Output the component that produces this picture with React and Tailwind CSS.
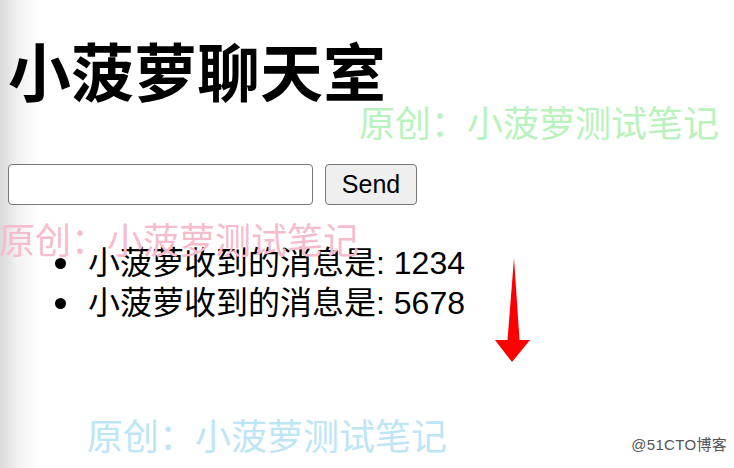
export default function App() {
  const cjk = { fontFamily: '"Noto Sans CJK SC", sans-serif' };
  const mixed = { fontFamily: '"Liberation Sans", "Noto Sans CJK SC", sans-serif' };
  const wm = "原创：小菠萝测试笔记";
  return (
    <div className="relative w-[734px] h-[468px] overflow-hidden bg-[linear-gradient(to_right,#d9d9d9_0px,#f0f0f0_16px,#ffffff_38px)]">
      <div className="flex flex-col pl-[8px]">
        <h1 className="mt-[37px] text-[63px] leading-[63px] font-bold text-black" style={cjk}>
          小菠萝聊天室
        </h1>
        <div className="mt-[64px] flex items-center gap-[12px]">
          <input
            type="text"
            className="w-[305px] h-[41px] rounded-[4px] border-[1.5px] border-[#767676] bg-white outline-none"
          />
          <button
            className="w-[92px] h-[41px] rounded-[4px] border-[1.5px] border-[#767676] bg-[#efefef] text-[25px] text-black leading-none"
            style={mixed}
          >
            Send
          </button>
        </div>
        <ul className="mt-[38px] flex flex-col pl-[47px]">
          {["1234", "5678"].map((n) => (
            <li key={n} className="flex items-center h-[40px] gap-[22px] text-[32px] text-black" style={mixed}>
              <span className="w-[11px] h-[11px] rounded-full bg-black shrink-0" />
              <span className="leading-[40px]">小菠萝收到的消息是: {n}</span>
            </li>
          ))}
        </ul>
      </div>

      <div className="absolute left-[359px] top-[99px] text-[36px] leading-[44px] text-[#b9f2bc] whitespace-nowrap" style={cjk}>
        {wm}
      </div>
      <div className="absolute left-[-1px] top-[216px] text-[36px] leading-[44px] text-[#f6bccd] whitespace-nowrap" style={cjk}>
        {wm}
      </div>
      <div className="absolute left-[87px] top-[412px] text-[36px] leading-[44px] text-[#bde5f6] whitespace-nowrap" style={cjk}>
        {wm}
      </div>

      <svg className="absolute left-[494px] top-[256px]" width="38" height="108" viewBox="0 0 38 108">
        <polygon points="20,2 25.5,84 36,84 18,106 1,84 13.5,84" fill="#ff0000" />
      </svg>

      <div className="absolute right-[7px] top-[436px] text-[15px] leading-[18px] text-[#555] tracking-[0.3px]" style={mixed}>
        @51CTO博客
      </div>
    </div>
  );
}
